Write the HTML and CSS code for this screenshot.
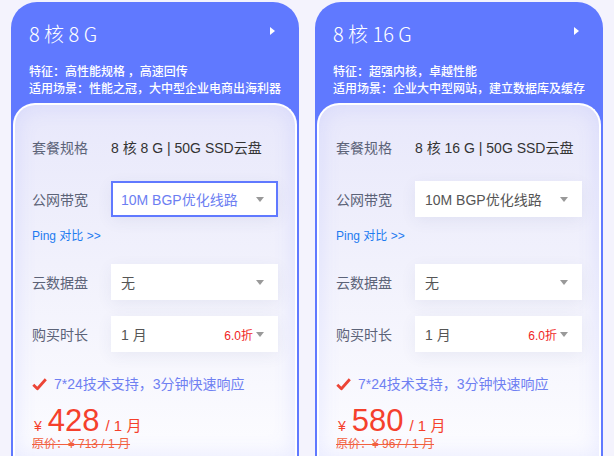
FILE: index.html
```html
<!DOCTYPE html>
<html lang="zh-CN">
<head>
    <meta charset="UTF-8">
    <meta name="viewport" content="width=device-width, initial-scale=1.0">
    <title>云服务器套餐</title>
    <link rel="stylesheet" href="styles.css">
</head>
<body>

<div class="plans">
    <div class="card">
        <div class="card-head">
            <div class="title-row">
                <span class="title">8 核 8 G</span>
                <span class="arrow"></span>
            </div>
            <p class="feature">特征：高性能规格 ，高速回传</p>
            <p class="feature">适用场景：性能之冠，大中型企业电商出海利器</p>
        </div>
        <div class="panel">
            <div class="row">
                <span class="label">套餐规格</span>
                <span class="value">8 核 8 G | 50G SSD云盘</span>
            </div>
            <div class="row">
                <span class="label">公网带宽</span>
                <div class="select active">
                    <span>10M BGP优化线路</span>
                    <span class="caret"></span>
                </div>
            </div>
            <a class="ping">Ping 对比 &gt;&gt;</a>
            <div class="row row-disk">
                <span class="label">云数据盘</span>
                <div class="select">
                    <span>无</span>
                    <span class="caret"></span>
                </div>
            </div>
            <div class="row">
                <span class="label">购买时长</span>
                <div class="select">
                    <span>1 月</span>
                    <span class="discount">6.0折</span>
                    <span class="caret"></span>
                </div>
            </div>
            <div class="support">
                <svg class="check" width="15" height="13" viewBox="0 0 15 13"><path d="M1.3 6.8 L5.4 10.8 L13.8 1.3" fill="none" stroke="#ec4436" stroke-width="2.8" stroke-linejoin="round"/></svg>
                <span>7*24技术支持，3分钟快速响应</span>
            </div>
            <div class="price">
                <span class="yen">¥</span>
                <span class="amount">428</span>
                <span class="unit">/ 1 月</span>
            </div>
            <div class="origin">原价：¥ 713 / 1 月</div>
        </div>
    </div>

    <div class="card">
        <div class="card-head">
            <div class="title-row">
                <span class="title">8 核 16 G</span>
                <span class="arrow"></span>
            </div>
            <p class="feature">特征：超强内核，卓越性能</p>
            <p class="feature">适用场景：企业大中型网站，建立数据库及缓存</p>
        </div>
        <div class="panel">
            <div class="row">
                <span class="label">套餐规格</span>
                <span class="value">8 核 16 G | 50G SSD云盘</span>
            </div>
            <div class="row">
                <span class="label">公网带宽</span>
                <div class="select">
                    <span>10M BGP优化线路</span>
                    <span class="caret"></span>
                </div>
            </div>
            <a class="ping">Ping 对比 &gt;&gt;</a>
            <div class="row row-disk">
                <span class="label">云数据盘</span>
                <div class="select">
                    <span>无</span>
                    <span class="caret"></span>
                </div>
            </div>
            <div class="row">
                <span class="label">购买时长</span>
                <div class="select">
                    <span>1 月</span>
                    <span class="discount">6.0折</span>
                    <span class="caret"></span>
                </div>
            </div>
            <div class="support">
                <svg class="check" width="15" height="13" viewBox="0 0 15 13"><path d="M1.3 6.8 L5.4 10.8 L13.8 1.3" fill="none" stroke="#ec4436" stroke-width="2.8" stroke-linejoin="round"/></svg>
                <span>7*24技术支持，3分钟快速响应</span>
            </div>
            <div class="price">
                <span class="yen">¥</span>
                <span class="amount">580</span>
                <span class="unit">/ 1 月</span>
            </div>
            <div class="origin">原价：¥ 967 / 1 月</div>
        </div>
    </div>
</div>

</body>
</html>
```

FILE: styles.css
```css
body {
    margin: 0;
    background-color: #f4f3fd;
    font-family: "Liberation Sans", "Noto Sans CJK SC", sans-serif;
    overflow: hidden;
}

.plans {
    display: flex;
    gap: 16px;
    padding: 2px 11px 0;
}

.card {
    width: 288px;
    height: 454px;
    box-sizing: border-box;
    background-color: #6079ff;
    border-radius: 26px 26px 0 0;
    padding: 0 2px;
    display: flex;
    flex-direction: column;
}

.card-head {
    padding: 20px 16px 0 16px;
    color: #fff;
}

.title-row {
    display: flex;
    justify-content: space-between;
    align-items: center;
    height: 24px;
}

.title {
    font-family: "Noto Sans CJK SC", sans-serif;
    font-weight: 300;
    font-size: 20px;
    line-height: 24px;
}

.arrow {
    width: 0;
    height: 0;
    border-top: 4px solid transparent;
    border-bottom: 4px solid transparent;
    border-left: 5px solid #fff;
    margin-right: 6px;
    margin-top: -6px;
}

.feature {
    margin: 0;
    font-family: "Noto Sans CJK SC", sans-serif;
    font-size: 12px;
    font-weight: 500;
    line-height: 17px;
}

.title-row + .feature {
    margin-top: 16px;
}

.panel {
    flex: 1;
    margin-top: 7px;
    border: 2px solid #fff;
    border-bottom: none;
    border-radius: 22px 22px 0 0;
    background: linear-gradient(180deg, #e8e8fb 0%, #f1f1fc 45%, #fcfcff 100%);
    box-shadow: inset 0 0 22px rgba(96, 110, 255, 0.13);
    padding: 0 17px;
}

.row {
    display: flex;
    align-items: center;
    height: 36px;
    margin-top: 16px;
    font-size: 14px;
}

.panel .row:first-child {
    margin-top: 24px;
}

.label {
    width: 79px;
    flex-shrink: 0;
    color: #5c6378;
    font-family: "Noto Sans CJK SC", sans-serif;
}

.value {
    color: #333;
}

.select {
    flex: 1;
    height: 36px;
    box-sizing: border-box;
    display: flex;
    align-items: center;
    padding: 0 14px 0 10px;
    background-color: #fff;
    color: #555;
    box-shadow: 0 4px 16px rgba(60, 70, 130, 0.07);
}

.select span:first-child {
    flex: 1;
}

.select.active {
    border: 2px solid #6079ff;
    color: #6c7ef2;
    padding-left: 8px;
    padding-right: 12px;
}

.discount {
    color: #f01e1e;
    font-size: 12px;
    margin-right: 3px;
}

.caret {
    width: 0;
    height: 0;
    border-left: 4px solid transparent;
    border-right: 4px solid transparent;
    border-top: 5px solid #999;
}

.ping {
    display: block;
    margin-top: 10px;
    line-height: 18px;
    font-size: 12px;
    color: #1d7bf0;
}

.row-disk {
    margin-top: 19px;
}

.support {
    display: flex;
    align-items: center;
    gap: 7px;
    margin-top: 22px;
    line-height: 20px;
    font-size: 14px;
    color: #6f80f2;
}

.price {
    display: flex;
    align-items: baseline;
    margin-top: 11px;
    height: 32px;
    line-height: 32px;
    color: #f5402c;
}

.yen {
    font-size: 14px;
    margin: 0 6px 0 2px;
}

.amount {
    font-size: 31px;
    margin-right: 6px;
}

.unit {
    font-size: 15px;
}

.origin {
    line-height: 14px;
    font-size: 12px;
    color: #f2603f;
    text-decoration: line-through;
}
```
